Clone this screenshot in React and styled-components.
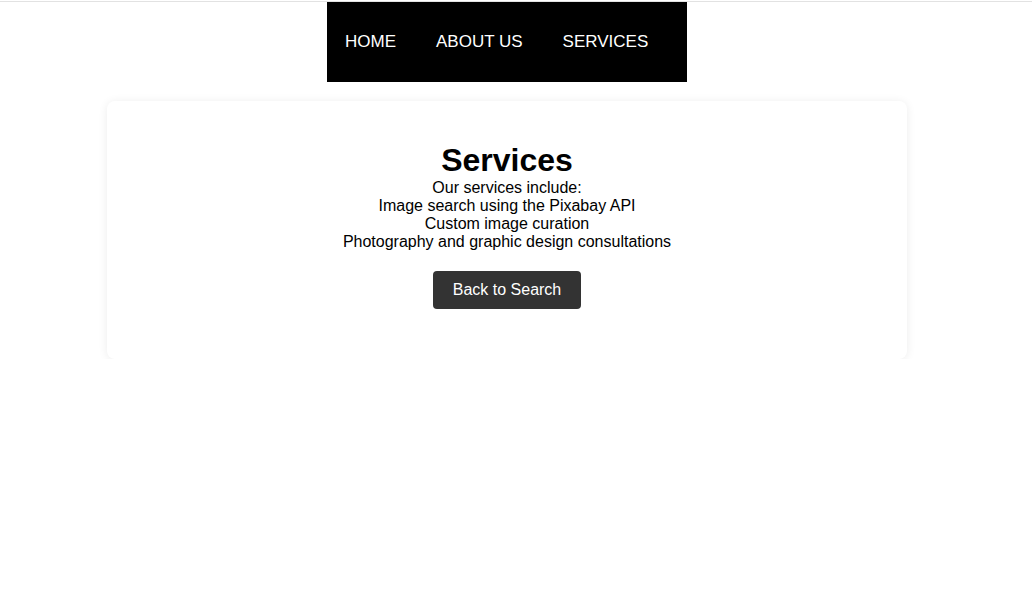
import React from "react";
import styled, { createGlobalStyle } from "styled-components";

const Global = createGlobalStyle`
  html, body { margin: 0; padding: 0; background: #fff; }
  body { font-family: "Liberation Sans", Arial, sans-serif; color: #000; }
`;

const Page = styled.div`
  display: flex;
  flex-direction: column;
  align-items: center;
  padding-top: 1px;
`;

const TopLine = styled.div`
  align-self: stretch;
  height: 1px;
  background: #e2e2e2;
`;

const Main = styled.div`
  align-self: stretch;
  display: flex;
  flex-direction: column;
  align-items: center;
  padding-right: 18px;
`;

const Nav = styled.nav`
  display: flex;
  align-items: center;
  gap: 40px;
  width: 360px;
  box-sizing: border-box;
  height: 80px;
  padding-left: 18px;
  background: #000;
`;

const NavLink = styled.a`
  color: #fff;
  font-size: 17px;
  text-decoration: none;
  text-transform: uppercase;
  line-height: 20px;
`;

const Card = styled.section`
  width: 800px;
  box-sizing: border-box;
  margin-top: 19px;
  padding: 41px 20px 50px;
  background: #fff;
  border-radius: 8px;
  box-shadow: 0 1px 10px rgba(0, 0, 0, 0.08);
  display: flex;
  flex-direction: column;
  align-items: center;
  text-align: center;
`;

const Title = styled.h1`
  margin: 0;
  font-size: 32px;
  font-weight: bold;
  line-height: 37px;
`;

const Text = styled.p`
  margin: 0;
  font-size: 16px;
  line-height: 18px;
`;

const Button = styled.button`
  margin-top: 20px;
  font-family: inherit;
  font-size: 16px;
  line-height: 18px;
  color: #fff;
  background: #333;
  border: none;
  border-radius: 4px;
  padding: 10px 20px;
  cursor: pointer;
`;

export default function App() {
  return (
    <>
      <Global />
      <Page>
        <TopLine />
        <Main>
          <Nav>
            <NavLink href="#">Home</NavLink>
            <NavLink href="#">About Us</NavLink>
            <NavLink href="#">Services</NavLink>
          </Nav>
          <Card>
            <Title>Services</Title>
            <Text>
              Our services include:
              <br />
              Image search using the Pixabay API
              <br />
              Custom image curation
              <br />
              Photography and graphic design consultations
            </Text>
            <Button>Back to Search</Button>
          </Card>
        </Main>
      </Page>
    </>
  );
}
